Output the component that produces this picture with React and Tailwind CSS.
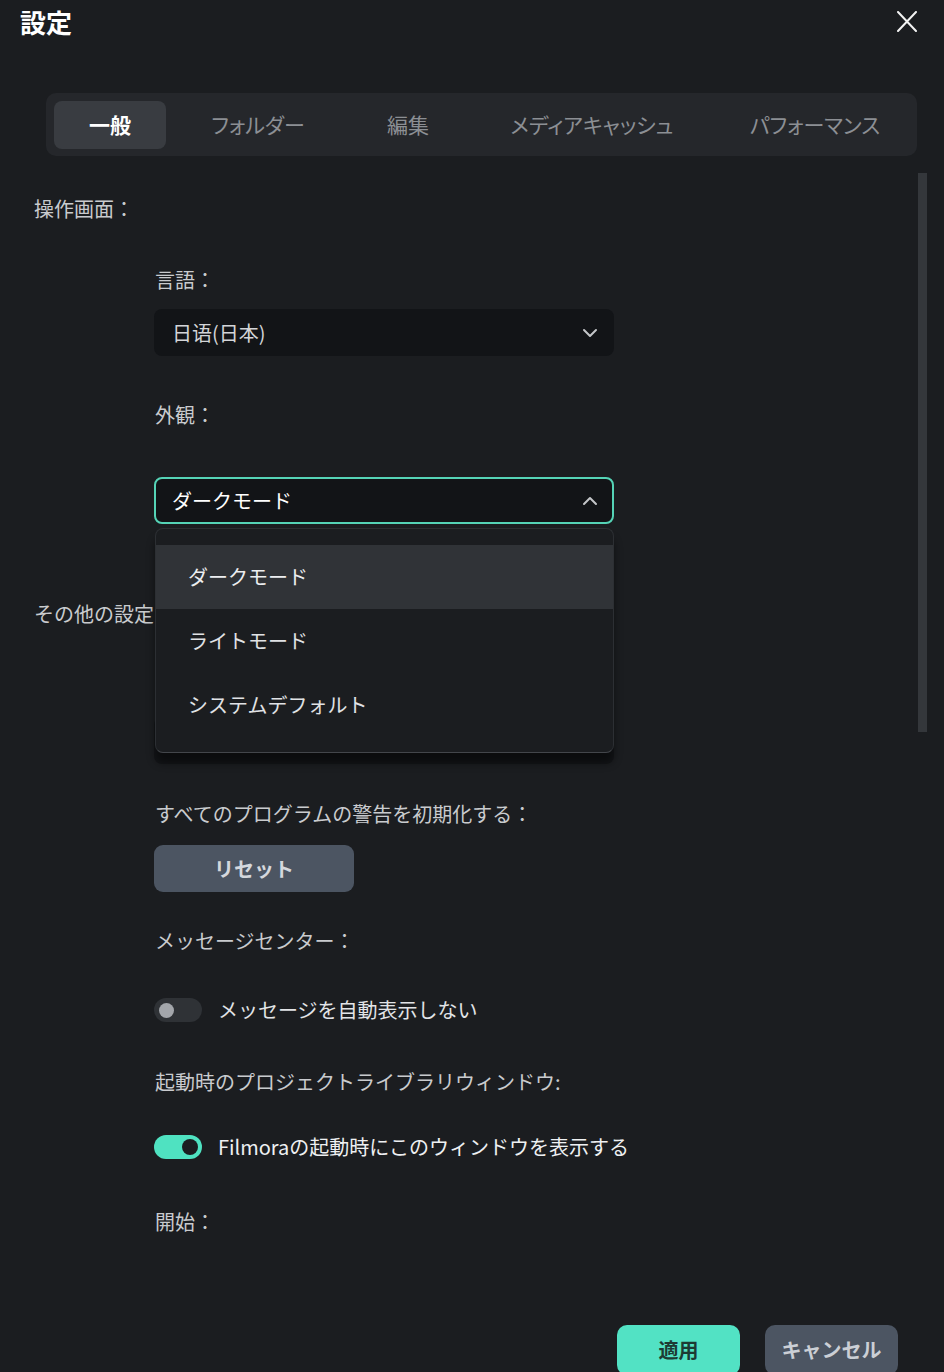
import React from "react";

const FONT = { fontFamily: '"Noto Sans CJK JP", "Noto Sans", sans-serif' };

function Chevron({ up }) {
  return (
    <svg width="16" height="10" viewBox="0 0 16 10" fill="none">
      <path
        d={up ? "M2 8 L8 2 L14 8" : "M2 2 L8 8 L14 2"}
        stroke="#c4c6c9"
        strokeWidth="2"
        strokeLinecap="round"
        strokeLinejoin="round"
      />
    </svg>
  );
}

function Label({ children, className = "" }) {
  return (
    <div className={`text-[20px] leading-[28px] text-[#c9cbce] ${className}`}>{children}</div>
  );
}

function Toggle({ on }) {
  return on ? (
    <div className="w-[48px] h-[24px] rounded-full bg-[#4fe2c1] flex items-center justify-end pr-[4px] shrink-0">
      <div className="w-[16px] h-[16px] rounded-full bg-[#1b1d20]" />
    </div>
  ) : (
    <div className="w-[48px] h-[24px] rounded-full bg-[#2f3236] flex items-center pl-[5px] shrink-0">
      <div className="w-[15px] h-[15px] rounded-full bg-[#a3a6ab]" />
    </div>
  );
}

export default function App() {
  const tabs = [
    { t: "一般", w: "w-[112px]", active: true },
    { t: "フォルダー", w: "w-[184px]" },
    { t: "編集", w: "w-[116px]" },
    { t: "メディアキャッシュ", w: "w-[252px]" },
    { t: "パフォーマンス", w: "w-[194px]" },
  ];
  return (
    <div className="w-[944px] h-[1372px] overflow-hidden bg-[#1b1d20]" style={FONT}>
      {/* header */}
      <div className="flex justify-between items-start pl-[20px] pr-[27px] pt-[6px]">
        <div className="text-[26px] leading-[32px] font-bold text-white">設定</div>
        <svg width="20" height="21" viewBox="0 0 20 21" className="mt-[5px]">
          <path d="M1 1 L19 20 M19 1 L1 20" stroke="#f2f2f2" strokeWidth="2" strokeLinecap="round" />
        </svg>
      </div>

      {/* tabs */}
      <div className="mt-[55px] ml-[46px] w-[871px] h-[63px] rounded-[10px] bg-[#25272b] pt-[8px] pl-[8px] flex">
        {tabs.map((x) => (
          <div
            key={x.t}
            className={`${x.w} h-[48px] flex items-center justify-center rounded-[8px] text-[21px] ${
              x.active ? "bg-[#393c41] text-white font-bold" : "text-[#8c8f94]"
            }`}
            style={{ fontFeatureSettings: '"palt"' }}
          >
            {x.t}
          </div>
        ))}
      </div>

      {/* content */}
      <div className="flex h-[1150px]">
        <div className="w-[918px] h-full overflow-hidden">
          <Label className="mt-[39px] pl-[34px]">操作画面：</Label>

          <div className="pl-[154px]">
            <Label className="mt-[43px] pl-[1px]">言語：</Label>
            <div className="mt-[15px] w-[460px] h-[47px] rounded-[8px] bg-[#121417] flex items-center justify-between pl-[18px] pr-[16px]">
              <span className="text-[20px] text-[#d3d5d8]">日语(日本)</span>
              <Chevron />
            </div>

            <Label className="mt-[45px] pl-[1px]">外観：</Label>
            <div className="relative mt-[48px] w-[460px]">
              <div className="h-[47px] rounded-[8px] bg-[#121417] border-2 border-[#55d3b6] flex items-center justify-between pl-[16px] pr-[14px]">
                <span className="text-[20px] text-white">ダークモード</span>
                <Chevron up />
              </div>
              {/* dropdown menu */}
              <div className="absolute z-10 left-[1px] top-[51px] w-[459px] h-[225px] rounded-[8px] bg-[#1b1d20] border border-[#2c2f33] border-b-[#43464b] shadow-[0_10px_8px_rgba(0,0,0,0.45)] pt-[16px] overflow-hidden">
                <div className="h-[64px] bg-[#303337] flex items-center pl-[32px] text-[20px] text-[#eceef0]">ダークモード</div>
                <div className="h-[64px] flex items-center pl-[32px] text-[20px] text-[#e0e2e5]">ライトモード</div>
                <div className="h-[64px] flex items-center pl-[32px] text-[20px] text-[#e0e2e5]">システムデフォルト</div>
              </div>
            </div>
          </div>

          <Label className="mt-[76px] pl-[34px]">その他の設定：</Label>

          <div className="pl-[154px]">
            <div className="mt-[89px] w-[460px] h-[47px] rounded-[8px] bg-[#141619]" />

            <Label className="mt-[36px] pl-[1px]">すべてのプログラムの警告を初期化する：</Label>
            <div className="mt-[17px] w-[200px] h-[47px] rounded-[9px] bg-[#4c5562] flex items-center justify-center text-[20px] font-bold text-[#d5d8dd]">
              リセット
            </div>

            <Label className="mt-[35px] pl-[1px]">メッセージセンター：</Label>
            <div className="mt-[41px] h-[28px] flex items-center gap-[16px]">
              <Toggle />
              <span className="text-[20px] text-[#e2e4e7]">メッセージを自動表示しない</span>
            </div>

            <Label className="mt-[44px] pl-[1px]">起動時のプロジェクトライブラリウィンドウ:</Label>
            <div className="mt-[37px] h-[28px] flex items-center gap-[16px]">
              <Toggle on />
              <span className="text-[20px] text-[#eef0f2]">Filmoraの起動時にこのウィンドウを表示する</span>
            </div>

            <Label className="mt-[47px] pl-[1px]">開始：</Label>
          </div>
        </div>
        <div className="w-[9px] mt-[17px] h-[559px] bg-[#34373b]" />
      </div>

      {/* footer */}
      <div className="flex justify-end gap-[25px] pr-[46px] pt-[19px]">
        <div className="w-[123px] h-[50px] rounded-[10px] bg-[#52e2c4] flex items-center justify-center text-[20px] font-bold text-[#1d3a33]">
          適用
        </div>
        <div className="w-[133px] h-[50px] rounded-[10px] bg-[#4c5562] flex items-center justify-center text-[20px] font-bold text-[#cbcfd5]">
          キャンセル
        </div>
      </div>
    </div>
  );
}
